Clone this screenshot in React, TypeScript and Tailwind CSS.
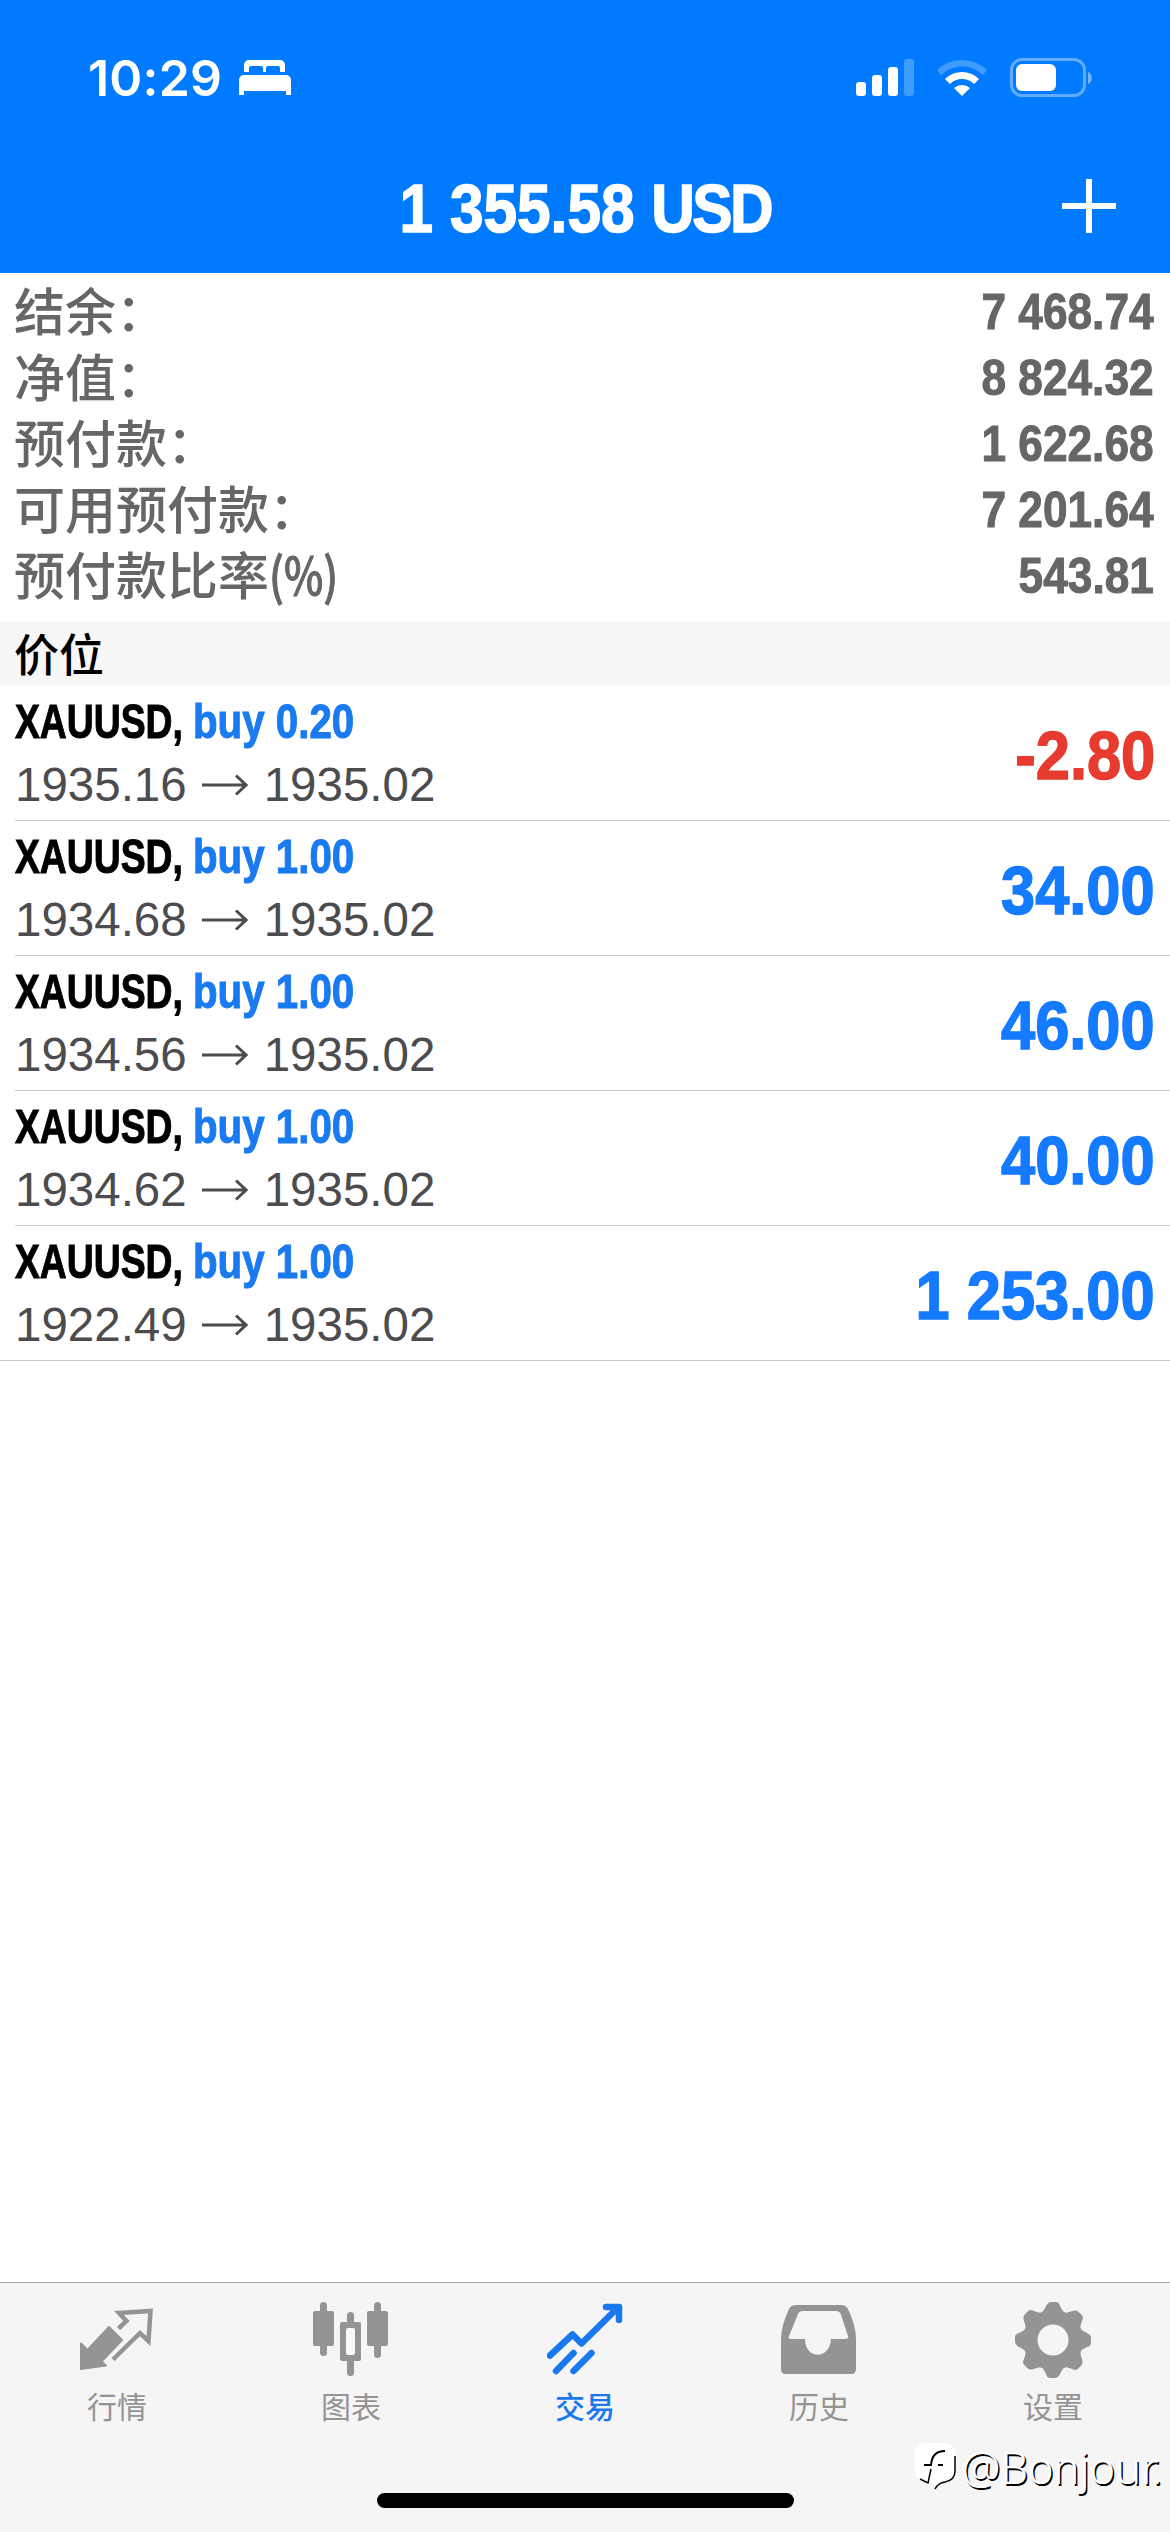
import type { ReactNode } from "react";
import { clsx } from "clsx";

type Position = {
  symbol: string;
  volume: string;
  openPrice: string;
  currentPrice: string;
  profit: string;
};

const SUMMARY = [
  { label: "结余：", value: "7 468.74" },
  { label: "净值：", value: "8 824.32" },
  { label: "预付款：", value: "1 622.68" },
  { label: "可用预付款：", value: "7 201.64" },
  { label: "预付款比率", unit: "(%)", value: "543.81" },
];

const POSITIONS: Position[] = [
  { symbol: "XAUUSD", volume: "0.20", openPrice: "1935.16", currentPrice: "1935.02", profit: "-2.80" },
  { symbol: "XAUUSD", volume: "1.00", openPrice: "1934.68", currentPrice: "1935.02", profit: "34.00" },
  { symbol: "XAUUSD", volume: "1.00", openPrice: "1934.56", currentPrice: "1935.02", profit: "46.00" },
  { symbol: "XAUUSD", volume: "1.00", openPrice: "1934.62", currentPrice: "1935.02", profit: "40.00" },
  { symbol: "XAUUSD", volume: "1.00", openPrice: "1922.49", currentPrice: "1935.02", profit: "1 253.00" },
];

function StatusBar() {
  return (
    <div className="flex h-[156px] items-center justify-between pr-[77px] pl-[88px]">
      <div className="flex items-center gap-[17px]">
        <span className="font-['Inter',sans-serif] text-[50px] leading-none font-semibold tracking-[0.2px]">
          10:29
        </span>
        <svg width="52" height="36" viewBox="0 0 52 36" fill="currentColor">
          <path d="M5 12V5a5 5 0 0 1 5-5h31a5 5 0 0 1 5 5v7h-5V8a2 2 0 0 0-2-2H29a2 2 0 0 0-2 2v4h-3V8a2 2 0 0 0-2-2H12a2 2 0 0 0-2 2v4Z" />
          <path d="M0 35V20a5 5 0 0 1 5-5h42a5 5 0 0 1 5 5v15h-5v-4H5v4Z" />
        </svg>
      </div>
      <div className="flex items-center gap-[22px]">
        <svg width="58" height="38" viewBox="0 0 58 38" fill="currentColor">
          <rect x="0" y="23" width="10" height="14" rx="3" />
          <rect x="16" y="16" width="10" height="21" rx="3" />
          <rect x="32" y="8" width="10" height="29" rx="3" />
          <rect x="48" y="0" width="10" height="37" rx="3" opacity=".25" />
        </svg>
        <svg width="52" height="38" viewBox="0 0 52 38" fill="currentColor">
          <path d="M1 11a36 36 0 0 1 50 0l-4 5a30 30 0 0 0-42 0Z" opacity=".25" />
          <path d="M9 20a24 24 0 0 1 34 0l-5 5a17 17 0 0 0-24 0Z" />
          <path d="M18 29a12 12 0 0 1 16 0l-8 8Z" />
        </svg>
        <svg width="83" height="40" viewBox="0 0 83 40" fill="currentColor">
          <rect x="1.5" y="1.5" width="73" height="36" rx="10.5" fill="none" stroke="currentColor" strokeWidth="3" opacity=".38" />
          <path d="M78 14c5 1 5 11 0 12Z" opacity=".45" />
          <rect x="6" y="6" width="40" height="27" rx="6" />
        </svg>
      </div>
    </div>
  );
}

function Header() {
  return (
    <header className="h-[273px] bg-[#007aff] text-white">
      <StatusBar />
      <div className="grid grid-cols-[120px_1fr_120px] items-center">
        <h1 className="col-start-2 flex h-[104px] items-center justify-center text-[69px] leading-none font-bold whitespace-nowrap [-webkit-text-stroke:1.5px]">
          <span className="inline-block scale-x-[0.875]">
            1 355.58 <span className="tracking-[-3px]">USD</span>
          </span>
        </h1>
        <button type="button" className="mb-1 ml-[12px]">
          <svg width="54" height="54" viewBox="0 0 54 54" stroke="currentColor" strokeWidth="6">
            <path d="M27 0v54M0 27h54" />
          </svg>
        </button>
      </div>
    </header>
  );
}

function AccountSummary() {
  return (
    <section className="h-[348px] pt-[3px] pr-4 pl-[14px] text-[#666]">
      {SUMMARY.map((item) => (
        <div key={item.label} className="flex h-[66px] items-center justify-between">
          <span className="font-['Noto_Sans_CJK_SC',sans-serif] text-[51px] leading-[66px] font-medium">
            {item.label}
            {item.unit ? (
              <span className="inline-block origin-left scale-x-[0.82] [-webkit-text-stroke:1px]">{item.unit}</span>
            ) : null}
          </span>
          <span className="mt-[6px] inline-block origin-right scale-x-[0.885] text-[50px] leading-[66px] font-bold [-webkit-text-stroke:1px]">
            {item.value}
          </span>
        </div>
      ))}
    </section>
  );
}

function PositionRow({ position, last }: { position: Position; last: boolean }) {
  const loss = position.profit.startsWith("-");

  return (
    <li className={clsx("h-[135px] border-b border-[#c8c7cc]", last ? "pl-[15px]" : "ml-[15px]")}>
      <div className="flex h-full items-center justify-between pr-[15px]">
        <div>
          <div className="flex h-[62px] items-center text-[47.5px] leading-none font-bold whitespace-nowrap [-webkit-text-stroke:1px]">
            <span className="w-[178px]">
              <span className="inline-block origin-left scale-x-[0.785] text-black">{position.symbol},</span>
            </span>
            <span className="inline-block origin-left scale-x-[0.848] text-[#1a7af0]">buy {position.volume}</span>
          </div>
          <div className="flex h-[62px] items-center pt-px text-[47.5px] leading-none text-[#4c4c4e]">
            <span>{position.openPrice}</span>
            <svg width="46" height="22" viewBox="0 0 46 22" className="mr-[16px] ml-[15px]" fill="none" stroke="currentColor" strokeWidth="3">
              <path d="M0 11h44M34 1.5 44 11 34 20.5" />
            </svg>
            <span>{position.currentPrice}</span>
          </div>
        </div>
        <span
          className={clsx(
            "mt-[5px] inline-block origin-right scale-x-[0.89] text-[69px] leading-none font-bold [-webkit-text-stroke:1.5px]",
            loss ? "text-[#e63b2e]" : "text-[#147aff]",
          )}
        >
          {position.profit}
        </span>
      </div>
    </li>
  );
}

function QuotesIcon() {
  return (
    <svg width="76" height="76" viewBox="0 0 76 76">
      <path fill="currentColor" stroke="currentColor" strokeWidth="2" strokeLinejoin="round" d="M2 41.500 8.500 48 30 25 43 38 22.500 59.500 27 63.500 2 67Z" />
      <path fill="none" stroke="currentColor" strokeWidth="4.500" d="m39.500 26.500 8-7.500-7.500-8 31.500-2-2 30-8.500-8-27 26.500" />
    </svg>
  );
}

function ChartIcon() {
  return (
    <svg width="76" height="76" viewBox="0 0 76 76" fill="currentColor">
      <rect x="7" y="0" width="7" height="54" rx="3.500" />
      <rect x="0" y="9" width="21" height="35" rx="2" />
      <rect x="61" y="0" width="7" height="56" rx="3.500" />
      <rect x="54" y="9" width="21" height="35" rx="2" />
      <rect x="34" y="10" width="7" height="64" rx="3.500" />
      <rect x="27" y="20" width="21" height="39" rx="2" />
      <rect x="33" y="26" width="9" height="27" rx="2" fill="#f8f8f8" />
    </svg>
  );
}

function TradeIcon() {
  return (
    <svg width="76" height="76" viewBox="0 0 76 76" fill="none" stroke="currentColor" strokeWidth="6.500" strokeLinecap="round" strokeLinejoin="round">
      <path d="M3 53.500 25.500 32.500l9 9L71 5.500M59 5h13v13" />
      <path d="m9 69 17.500-18M26.500 69l18-18" />
    </svg>
  );
}

function HistoryIcon() {
  return (
    <svg width="76" height="76" viewBox="0 0 76 76" fill="currentColor" fillRule="evenodd">
      <path d="M17 3h43q5 0 7 4 8 17 8 30v30q0 5-5 5H5q-5 0-5-5V37Q0 24 8 7q2-4 7-4Zm5 6q-4 0-5 3L8 34q-1 3 2 3h14c0 21 25 21 26 0h14q4 0 3-3l-7-21q-1-4-5-4Z" />
    </svg>
  );
}

function SettingsIcon() {
  return (
    <svg width="76" height="76" viewBox="0 0 76 76" fill="currentColor">
      <mask id="gear-hole">
        <rect width="76" height="76" fill="white" />
        <circle cx="38" cy="38" r="15.500" fill="black" />
      </mask>
      <g mask="url(#gear-hole)">
        <circle cx="38" cy="38" r="30" />
        {[0, 45, 90, 135, 180, 225, 270, 315].map((angle) => (
          <path key={angle} transform={`rotate(${angle} 38 38)`} d="M26 11q2-1 4-5l1-2q2-4 5-4h5q3 0 4 4l1 2q2 4 4 5Z" />
        ))}
      </g>
    </svg>
  );
}

const TABS: { label: string; icon: ReactNode; active?: boolean }[] = [
  { label: "行情", icon: <QuotesIcon /> },
  { label: "图表", icon: <ChartIcon /> },
  { label: "交易", icon: <TradeIcon />, active: true },
  { label: "历史", icon: <HistoryIcon /> },
  { label: "设置", icon: <SettingsIcon /> },
];

function TabBar() {
  return (
    <nav className="grid h-[250px] grid-cols-5 border-t border-[#a9a9a9] bg-[#f5f5f5] pt-[19px]">
      {TABS.map((tab) => (
        <div
          key={tab.label}
          className={clsx("flex flex-col items-center", tab.active ? "text-[#1a78ee]" : "text-[#949494]")}
        >
          {tab.icon}
          <span
            className={clsx(
              "mt-[7px] font-['Noto_Sans_CJK_SC',sans-serif] text-[30px] leading-[40px]",
              tab.active && "font-medium",
            )}
          >
            {tab.label}
          </span>
        </div>
      ))}
    </nav>
  );
}

function Watermark() {
  return (
    <div className="absolute right-[8px] bottom-[38px] flex items-center gap-[5px]">
      <svg width="42" height="48" viewBox="0 0 42 48" fill="none">
        <path d="M11 0h18q11 0 11 11v17q0 9-10 11-7 1-10 7v-6h-9Q0 38 0 28V11Q0 0 11 0Z" fill="white" />
        <path d="M40 13v15q0 9-10 11-7 1-10 7M5 36l8 4 3-14" stroke="black" strokeWidth="1.500" />
        <path d="M9 22h7q1-14 14-14M23 22h5" stroke="black" strokeWidth="2" />
      </svg>
      <span className="font-['Noto_Sans',sans-serif] text-[43.5px] leading-[54px] font-light text-white [text-shadow:1.5px_1.5px_0.5px_#000]">
        @Bonjour.
      </span>
    </div>
  );
}

export default function App() {
  return (
    <div className="relative flex h-[2532px] w-[1170px] flex-col overflow-hidden bg-white font-['Liberation_Sans',Arial,sans-serif]">
      <Header />
      <AccountSummary />
      <h2 className="h-[65px] bg-[#f7f7f7] px-[14px] font-['Noto_Sans_CJK_SC',sans-serif] text-[45px] leading-[63px] font-medium text-black">
        价位
      </h2>
      <ul className="flex-1">
        {POSITIONS.map((position, index) => (
          <PositionRow key={index} position={position} last={index === POSITIONS.length - 1} />
        ))}
      </ul>
      <TabBar />
      <div className="absolute bottom-[24px] left-[377px] h-[15px] w-[417px] rounded-full bg-black" />
      <Watermark />
    </div>
  );
}
